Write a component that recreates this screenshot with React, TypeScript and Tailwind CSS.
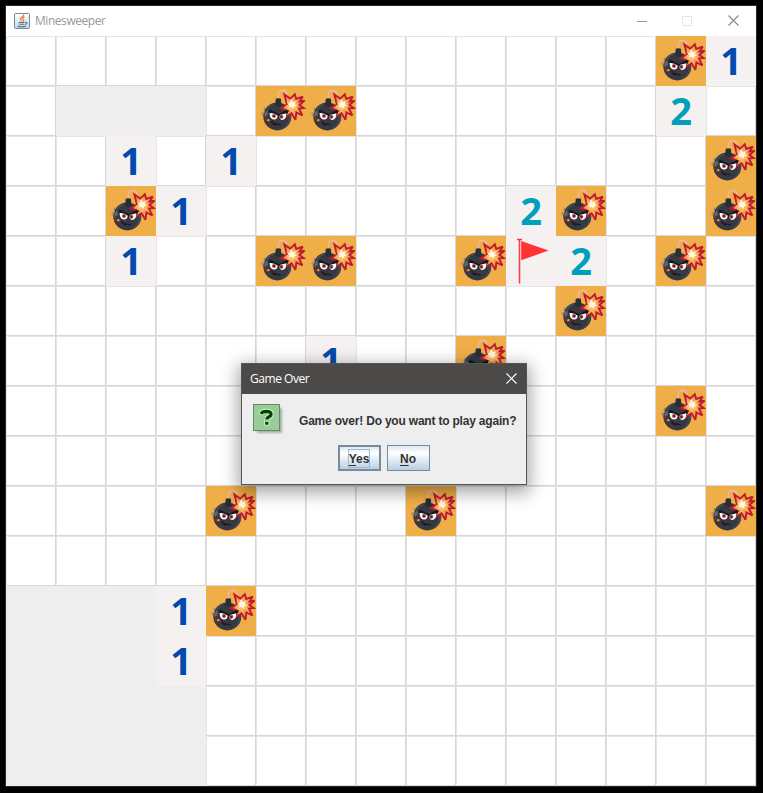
const BOARD = [
  ".............*1",
  ".   .**......2.",
  "..1.1.........*",
  "..*1......2*..*",
  "..1..**..*F2.*.",
  "...........*...",
  "......1..*.....",
  ".............*.",
  "...............",
  "....*...*.....*",
  "...............",
  "   1*..........",
  "   1...........",
  "    ...........",
  "    ...........",
];

function Bomb() {
  return (
    <svg viewBox="0 0 50 50" className="block h-[50px] w-[50px] bg-[#f0ae49]">
      <path d="M22.3 13.5V9.500C22.300 3.200 29.500 2.800 30.800 7.500L31 12" fill="none" stroke="#efb8a4" strokeWidth="1.400" />
      <circle cx="21.300" cy="30.400" r="14" fill="#343942" />
      <path d="M19.700 12.800q2.800-1.200 5.200 0l.5 7q-3 1.500-6.200 0z" fill="#292d34" />
      <path d="M29 19.500q8 7 5.500 15T22 44.200q9-3 10.500-11T29 19.500z" fill="#424751" />
      <path d="M10.500 24.500q2-4.500 7-6" fill="none" stroke="#48505b" strokeWidth="1.200" />
      <path
        d="M28.400 8.600L34.200 12.600 38.800 8.300 40.200 13 46.800 10.600 43.600 15.400 48.600 14.600 43.400 19 47.600 22 43 22.600 46.400 29.500 40.400 26.500 39.400 33.800 35.600 27.200 29.400 31 30.800 24.400 24.800 22.200 31 18.600z"
        fill="#f3a450"
        stroke="#bf1a30"
        strokeWidth="1.900"
        strokeMiterlimit="3"
      />
      <path d="M36 12l1.300 3.400 3.700-1.700-1.200 3.500 2.800 1.600-2.700 1.800 1.600 3.700-3.700-1.200-1.400 3.600-2.100-3.200-3.300 1.400.9-3.200-2.900-1.500 3-1.600-1.500-4.200 3.700 1.600z" fill="#ffbd69" />
      <path d="M35.600 13.800l1.200 2.500 2.600-.7-.6 2.600 2.200 1.700-2.800.3-.7 2.700-1.900-2-2.700.8.7-2.500-2-1.500 2.600-.8-.3-2.400z" fill="#fff5e2" />
      <path d="M12.500 25.100l2-1.200 7.300 3.700 1.800.5 6.800-4 2.700.5-2.500 4.600-7.300 2.600-7.500-1.600z" fill="#15181d" />
      <path d="M13.600 27q4.300-.6 8.200 2.800-.4 3.900-4 3.700-4-.4-4.200-6.500z" fill="#fff" />
      <path d="M23.200 30.200q3-2.500 7.200-3 .1 6.200-4 6.700-2.600.2-3.200-3.700z" fill="#fff" />
      <circle cx="18" cy="30" r="2.100" fill="#c35353" />
      <circle cx="25.300" cy="30.800" r="2.100" fill="#c35353" />
      <circle cx="18" cy="30" r="1" fill="#302024" />
      <circle cx="25.300" cy="30.800" r="1" fill="#302024" />
      <path d="M15.500 35q1.700 3.500 5 3.700" fill="none" stroke="#3d171b" strokeWidth="2" />
      <path d="M17.500 38.200q4-.7 7.300 1" fill="none" stroke="#15171c" strokeWidth="1.200" />
      <path d="M9.500 31.500v4M10.500 34l4 2" fill="none" stroke="#7e3029" strokeWidth="1.500" />
      <path d="M11.300 34.500l2-.8" stroke="#f7be4a" strokeWidth="1.500" />
      <path d="M9.200 30.500V27q-2-2.500-.6-5.300M6.600 29.500q-1.400-1.500 0-3.500M10.900 29.500v-4.500" fill="none" stroke="#8b8580" strokeWidth="1" />
    </svg>
  );
}

function Flag() {
  return (
    <svg viewBox="0 0 50 50" className="block h-[50px] w-[50px] bg-[#f5f1f1]">
      <path d="M15.200 5L42.500 14.600 15.200 24.300z" fill="#ff3334" />
      <path d="M13.500 4v43.500" stroke="#ef4347" strokeWidth="1.600" />
      <path d="M11 3.500h5" stroke="#ef3b3e" strokeWidth="1.500" />
    </svg>
  );
}

function Cell({ kind }: { kind: string }) {
  if (kind === "*") return <Bomb />;
  if (kind === "F") return <Flag />;
  if (kind === " ") return <div className="bg-[#eeeeee]" />;
  if (kind === ".")
    return <div className="border border-t-[#e5e5e5] border-r-[#d6d6d6] border-b-[#d6d6d6] border-l-[#e5e5e5] bg-white" />;
  return (
    <div
      className={`h-[50px] bg-[#f5f1f1] text-center font-['Open_Sans',sans-serif] text-[38px] leading-[48px] font-bold ${
        kind === "1" ? "text-[#004bad]" : "text-[#009fbc]"
      }`}
    >
      {kind}
    </div>
  );
}

function JavaIcon() {
  return (
    <svg viewBox="0 0 16 16" className="h-4 w-4">
      <defs>
        <linearGradient id="java" x1="0" y1="0" x2="0" y2="1">
          <stop stopColor="#fff" />
          <stop offset="1" stopColor="#cbd5dd" />
        </linearGradient>
      </defs>
      <rect x=".5" y=".5" width="15" height="15" rx="1" fill="url(#java)" stroke="#71899a" />
      <path d="M9.500 1.500Q10 3.300 7.500 4.500T7.700 8M10.500 4Q7.500 5 9 6.300T8.500 8.500" fill="none" stroke="#e88238" strokeWidth="1.200" />
      <path d="M4.500 9.500h6M5 11.300h5M3.500 13.200q4 1 8.500 0M11 9.300q3-.4 1.400 1.600l-1.700.7" fill="none" stroke="#4f7693" strokeWidth="1.100" />
    </svg>
  );
}

function GameOverDialog() {
  return (
    <div className="absolute top-[363px] left-[241px] flex h-[122px] w-[286px] flex-col border border-[#555555] bg-[#eeeeee] shadow-[0_5px_16px_3px_rgba(0,0,0,0.35)]">
      <div className="flex h-[30px] shrink-0 items-center justify-between bg-[#4c4a48] pr-[9px] pl-2 text-white">
        <span className="font-['Open_Sans',sans-serif] text-[12px] tracking-[-0.45px]">Game Over</span>
        <svg viewBox="0 0 11 11" className="mb-[2px] h-[11px] w-[11px]">
          <path d="M.5.500l10 10M10.500.500l-10 10" stroke="white" strokeWidth="1.200" />
        </svg>
      </div>
      <div className="flex pt-[10px] pl-[11px]">
        <svg viewBox="0 0 32 32" className="h-8 w-8 shrink-0">
          <defs>
            <filter id="soft" x="-20%" y="-20%" width="140%" height="140%">
              <feGaussianBlur stdDeviation="1" />
            </filter>
          </defs>
          <rect x="4" y="4" width="25" height="25" fill="#000" opacity=".28" filter="url(#soft)" />
          <rect x=".5" y=".5" width="26" height="26" fill="#99cc99" stroke="#668866" />
          <path d="M8.300 10.600Q8.300 7.300 13.500 7.300T18 10.300Q18 12 15.300 13.200 13.800 14 13.800 16M13.800 17v4.500" fill="none" stroke="#ccffcc" strokeWidth="5" />
          <path d="M8.300 10Q8.700 7.500 13.500 7.500T18 10.300Q18 12 15.300 13.200 13.800 14 13.800 15.500M13.800 17.800v2.900" fill="none" stroke="#004400" strokeWidth="3.300" />
        </svg>
        <p className="ml-[14px] pt-[9px] font-['Liberation_Sans',sans-serif] text-[12px] leading-4 font-bold tracking-[-0.2px] whitespace-nowrap text-[#333333]">
          Game over! Do you want to play again?
        </p>
      </div>
      <div className="flex justify-center gap-1.5 pt-[9px] pr-[1px] font-['Liberation_Sans',sans-serif] text-[12px] leading-4 font-bold text-[#333333]">
        <button className="flex h-[26px] w-[43px] items-center justify-center border-2 border-[#7a8a99] bg-linear-to-b from-[#dde8f3] via-white via-30% to-[#b8cfe5]">
          <span className="border border-[#a3b8cc] pt-px">
            <u className="underline-offset-2">Y</u>es
          </span>
        </button>
        <button className="flex h-[26px] w-[43px] items-center justify-center border border-[#7a8a99] bg-linear-to-b from-[#dde8f3] via-white via-30% to-[#b8cfe5]">
          <span className="pt-[2px]">
            <u className="underline-offset-2">N</u>o
          </span>
        </button>
      </div>
    </div>
  );
}

export default function App() {
  return (
    <div className="relative h-[793px] w-[763px] overflow-hidden bg-black p-[5px]">
      <main className="w-[752px] border border-[#292929] bg-white">
        <header className="flex h-[30px] items-center pl-2">
          <JavaIcon />
          <h1 className="ml-[5px] font-['Open_Sans',sans-serif] text-[12px] tracking-[-0.45px] text-[#999999]">Minesweeper</h1>
          <svg viewBox="0 0 102 11" className="mr-[17px] mb-[2px] ml-auto h-[11px] w-[102px]" fill="none">
            <path d="M0 6.500h10" stroke="#999" />
            <path d="M45.500 1.500h9v9h-9z" stroke="#e5e5e5" />
            <path d="M91.500.500l10 10M101.500.500l-10 10" stroke="#888" strokeWidth="1.100" />
          </svg>
        </header>
        <section className="grid auto-rows-[50px] grid-cols-[repeat(15,50px)]">
          {BOARD.flatMap((row, y) => row.split("").map((kind, x) => <Cell key={`${x}-${y}`} kind={kind} />))}
        </section>
      </main>
      <GameOverDialog />
    </div>
  );
}
